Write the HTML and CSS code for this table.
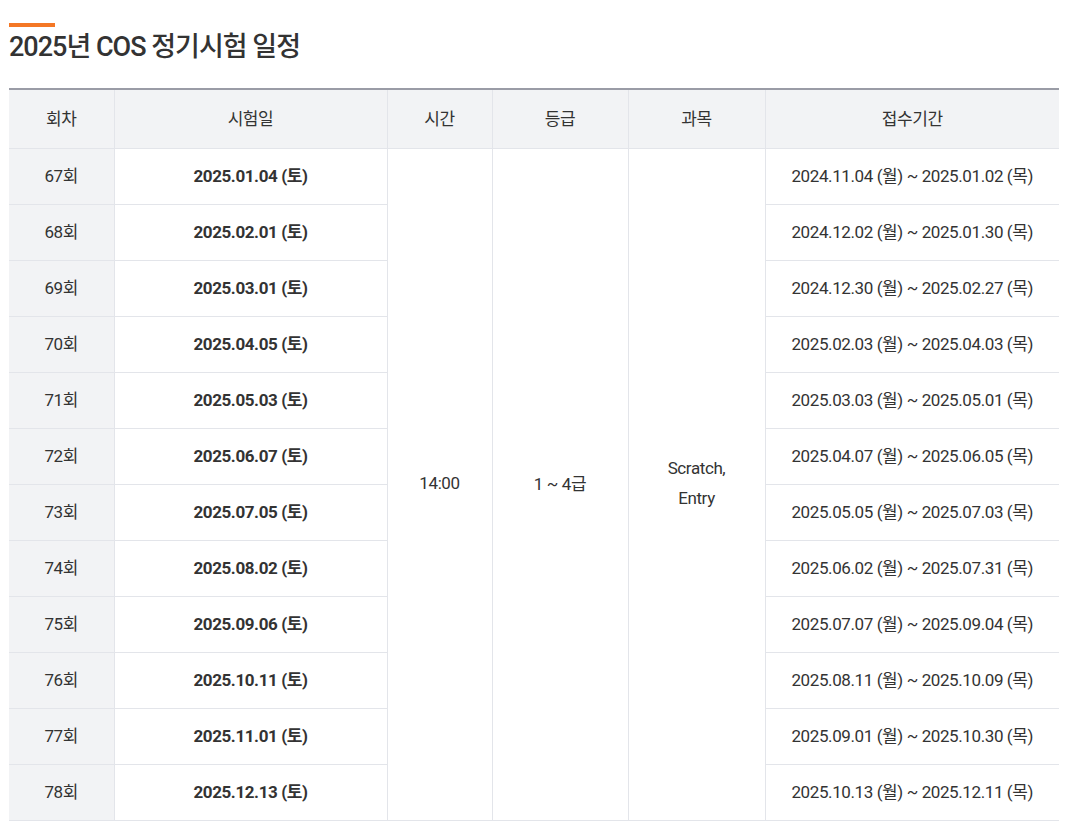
FILE: index.html
```html
<!DOCTYPE html>
<html lang="ko">
<head>
    <meta charset="UTF-8">
    <meta name="viewport" content="width=device-width, initial-scale=1.0">
    <title>2025년 COS 정기시험 일정</title>
    <link rel="stylesheet" href="styles.css">
</head>
<body>
    <div class="schedule">
        <h2 class="schedule-title">2025년 COS 정기시험 일정</h2>
        <table class="schedule-table">
            <colgroup>
                <col class="c-round">
                <col class="c-date">
                <col class="c-time">
                <col class="c-grade">
                <col class="c-subject">
                <col class="c-period">
            </colgroup>
            <thead>
                <tr>
                    <th>회차</th>
                    <th>시험일</th>
                    <th>시간</th>
                    <th>등급</th>
                    <th>과목</th>
                    <th>접수기간</th>
                </tr>
            </thead>
            <tbody>
                <tr>
                    <td class="round">67회</td>
                    <td class="date">2025.01.04 (토)</td>
                    <td rowspan="12">14:00</td>
                    <td rowspan="12">1 ~ 4급</td>
                    <td rowspan="12" class="subject">Scratch,<br>Entry</td>
                    <td>2024.11.04 (월) ~ 2025.01.02 (목)</td>
                </tr>
                <tr><td class="round">68회</td><td class="date">2025.02.01 (토)</td><td>2024.12.02 (월) ~ 2025.01.30 (목)</td></tr>
                <tr><td class="round">69회</td><td class="date">2025.03.01 (토)</td><td>2024.12.30 (월) ~ 2025.02.27 (목)</td></tr>
                <tr><td class="round">70회</td><td class="date">2025.04.05 (토)</td><td>2025.02.03 (월) ~ 2025.04.03 (목)</td></tr>
                <tr><td class="round">71회</td><td class="date">2025.05.03 (토)</td><td>2025.03.03 (월) ~ 2025.05.01 (목)</td></tr>
                <tr><td class="round">72회</td><td class="date">2025.06.07 (토)</td><td>2025.04.07 (월) ~ 2025.06.05 (목)</td></tr>
                <tr><td class="round">73회</td><td class="date">2025.07.05 (토)</td><td>2025.05.05 (월) ~ 2025.07.03 (목)</td></tr>
                <tr><td class="round">74회</td><td class="date">2025.08.02 (토)</td><td>2025.06.02 (월) ~ 2025.07.31 (목)</td></tr>
                <tr><td class="round">75회</td><td class="date">2025.09.06 (토)</td><td>2025.07.07 (월) ~ 2025.09.04 (목)</td></tr>
                <tr><td class="round">76회</td><td class="date">2025.10.11 (토)</td><td>2025.08.11 (월) ~ 2025.10.09 (목)</td></tr>
                <tr><td class="round">77회</td><td class="date">2025.11.01 (토)</td><td>2025.09.01 (월) ~ 2025.10.30 (목)</td></tr>
                <tr><td class="round">78회</td><td class="date">2025.12.13 (토)</td><td>2025.10.13 (월) ~ 2025.12.11 (목)</td></tr>
            </tbody>
        </table>
    </div>
</body>
</html>
```

FILE: styles.css
```css
body {
    margin: 0;
    padding: 0;
    background-color: #fff;
    font-family: Roboto, "Noto Sans CJK KR", sans-serif;
    color: #333;
}
.schedule {
    padding: 23px 11px 0 9px;
}
.schedule-title {
    position: relative;
    margin: 0 0 23px;
    padding-top: 6px;
    font-size: 27px;
    font-weight: 500;
    letter-spacing: -1px;
    line-height: 36px;
    color: #333;
}
.schedule-title::before {
    content: "";
    position: absolute;
    left: 0;
    top: 0;
    width: 46px;
    height: 4px;
    background-color: #f47725;
}
.schedule-table {
    width: 1050px;
    border-collapse: collapse;
    border-top: 2px solid #9a9ca6;
    table-layout: fixed;
    font-size: 17px;
    letter-spacing: -0.4px;
}
.c-round { width: 105px; }
.c-date { width: 273px; }
.c-time { width: 105px; }
.c-grade { width: 136px; }
.c-subject { width: 137px; }
.c-period { width: 294px; }
th, td {
    border: 1px solid #e3e5ea;
    text-align: center;
    padding: 0 0 4px;
    height: 51px;
}
tr > :first-child {
    border-left: 0;
}
tr > :last-child {
    border-right: 0;
}
th {
    height: 54px;
    background-color: #f2f3f5;
    font-weight: 400;
}
.round {
    background-color: #f2f3f5;
}
.date {
    font-weight: 700;
}
.subject {
    line-height: 30px;
}
```
